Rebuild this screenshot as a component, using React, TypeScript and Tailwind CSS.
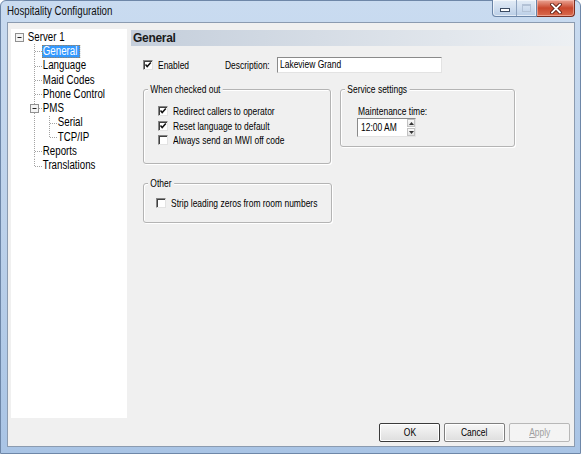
// Hospitality Configuration dialog - Windows 7 style property window
import React from "react";

type GutterKind = "child" | "childLast" | "pms" | "grand" | "grandLast";

const ROW_H = 14.3;
const MID = 7.5;

// The dialog font is a narrow sans; Liberation Sans squeezed horizontally gives the same run widths
const Txt = ({ children, wide, center }: { children: React.ReactNode; wide?: boolean; center?: boolean }) => (
  <span
    className={`inline-block whitespace-nowrap ${wide ? "scale-x-[0.81]" : "scale-x-[0.77]"} ${
      center ? "origin-center" : "origin-left"
    }`}
  >
    {children}
  </span>
);

const Expander = ({ x, y }: { x: number; y: number }) => (
  <g>
    <rect x={x} y={y} width={8} height={8} fill="#f4f4f4" stroke="#919191" />
    <line x1={x + 2} y1={y + 4} x2={x + 6} y2={y + 4} stroke="#222" />
  </g>
);

const Dots = ({ x1, y1, x2, y2 }: { x1: number; y1: number; x2: number; y2: number }) => (
  <line x1={x1} y1={y1} x2={x2} y2={y2} stroke="#a3a3a3" strokeDasharray="1 1" />
);

function Gutter({ kind }: { kind: GutterKind }) {
  if (kind === "grand" || kind === "grandLast") {
    return (
      <svg width="31" height={ROW_H} className="shrink-0">
        <Dots x1={8.5} y1={0} x2={8.5} y2={ROW_H} />
        <Dots x1={23.5} y1={0} x2={23.5} y2={kind === "grand" ? ROW_H : MID} />
        <Dots x1={24} y1={MID} x2={31} y2={MID} />
      </svg>
    );
  }
  return (
    <svg width="16" height={ROW_H} className="shrink-0">
      <Dots x1={8.5} y1={0} x2={8.5} y2={kind === "childLast" ? MID : ROW_H} />
      {kind === "pms" ? (
        <>
          <Dots x1={13} y1={MID} x2={16} y2={MID} />
          <Expander x={4.5} y={MID - 4} />
        </>
      ) : (
        <Dots x1={9} y1={MID} x2={16} y2={MID} />
      )}
    </svg>
  );
}

const TreeLabel = ({ label, selected }: { label: string; selected?: boolean }) => (
  <span
    className={`inline-block h-[13px] origin-left scale-x-[0.81] whitespace-nowrap border pr-[2px] leading-[11px] ${
      selected ? "border-dotted border-[#b07a3c] bg-[#3399ff] text-white" : "border-transparent"
    }`}
  >
    {label}
  </span>
);

const TreeRow = ({ label, kind, selected }: { label: string; kind: GutterKind; selected?: boolean }) => (
  <div className="flex h-[14.3px] items-center pl-[15px]">
    <Gutter kind={kind} />
    <TreeLabel label={label} selected={selected} />
  </div>
);

function Check({ checked }: { checked?: boolean }) {
  return (
    <span className="flex h-[10px] w-[10px] shrink-0 items-center justify-center border border-b-[#e3e3e3] border-l-[#858585] border-r-[#e3e3e3] border-t-[#858585] bg-white shadow-[inset_1px_1px_0_#404040]">
      {checked && (
        <svg width="8" height="8" viewBox="0 0 8 8">
          <path d="M1.5 3.5 L3.2 5.5 L6.8 1.5" stroke="#111" strokeWidth="1.5" fill="none" />
        </svg>
      )}
    </span>
  );
}

const CheckRow = ({ label, checked, className = "" }: { label: string; checked?: boolean; className?: string }) => (
  <div className={`flex items-center gap-[5px] ${className}`}>
    <Check checked={checked} />
    <span className="leading-[14px]">
      <Txt>{label}</Txt>
    </span>
  </div>
);

const GroupBox = ({ title, className, children }: { title: string; className: string; children: React.ReactNode }) => (
  <div className={`relative rounded-[3px] border border-[#b4b4b4] shadow-[inset_1px_1px_0_#ffffff,1px_1px_0_#ffffff] ${className}`}>
    <span className="absolute left-[4px] top-[-8px] inline-block origin-left scale-x-[0.77] whitespace-nowrap bg-[#f0f0f0] px-[3px] leading-[14px]">
      {title}
    </span>
    {children}
  </div>
);

const DialogButton = ({ children, isDefault, disabled }: { children: React.ReactNode; isDefault?: boolean; disabled?: boolean }) => (
  <button
    type="button"
    className={`flex h-[19px] w-[61px] items-center justify-center rounded-[2px] border bg-gradient-to-b text-[11px] leading-[17px] ${
      disabled
        ? "border-[#b8b8b8] from-[#f4f4f4] to-[#f4f4f4] text-[#a0a0a0]"
        : isDefault
          ? "border-[#3b3b3b] from-[#f7f7f7] to-[#dedede] shadow-[inset_0_0_0_1px_#ffffff]"
          : "border-[#7f7f7f] from-[#f7f7f7] to-[#dedede] shadow-[inset_0_0_0_1px_#ffffff]"
    }`}
  >
    <Txt center>{children}</Txt>
  </button>
);

const SunkenBox = "border border-b-[#e3e3e3] border-l-[#8a8a8a] border-r-[#e3e3e3] border-t-[#8a8a8a] bg-white";

export default function App() {
  return (
    <div className="h-[454px] w-[581px] overflow-hidden bg-white">
      <div className="flex h-full w-full flex-col rounded-t-[6px] border border-[#6e87a8] bg-gradient-to-b from-[#c9dbf0] via-[#bcd1ea] to-[#a9c4e5] font-['Liberation_Sans',sans-serif] text-[11px] text-black">
        {/* title bar */}
        <div className="flex h-[21px] shrink-0 items-start justify-between">
          <span className="pl-[6px] pt-[3px] text-[12px] leading-[15px] text-[#101010]">
            <Txt wide>Hospitality Configuration</Txt>
          </span>
          <div className="mr-[5px] -mt-[1px] flex h-[17px]">
            <div className="flex w-[45px] overflow-hidden rounded-bl-[4px] border border-t-0 border-[#6a84a6] bg-gradient-to-b from-[#e3ecf6] via-[#d0deef] to-[#b9cde6] shadow-[inset_0_0_0_1px_rgba(255,255,255,0.6)]">
              <div className="flex w-[24px] items-end justify-center border-r border-[#8ea3bf] pb-[4px]">
                <span className="h-[4px] w-[10px] border border-[#3b4b62] bg-white" />
              </div>
              <div className="flex flex-1 items-center justify-center">
                <span className="h-[8px] w-[9px] border border-t-2 border-[#b3c2d6]" />
              </div>
            </div>
            <div className="flex w-[38px] items-center justify-center rounded-br-[4px] border border-l-0 border-t-0 border-[#7b2d1f] bg-gradient-to-b from-[#e9a394] via-[#c9472d] to-[#d96a4d] shadow-[inset_0_0_0_1px_rgba(255,210,200,0.5)]">
              <svg width="12" height="11" viewBox="0 0 12 11">
                <path d="M2 1.5 L10 9.5 M10 1.5 L2 9.5" stroke="#5a1a10" strokeWidth="3.6" strokeLinecap="square" />
                <path d="M2 1.5 L10 9.5 M10 1.5 L2 9.5" stroke="#ffffff" strokeWidth="1.8" strokeLinecap="square" />
              </svg>
            </div>
          </div>
        </div>

        {/* client area */}
        <div className="flex-1 pb-[6px] pl-[6px] pr-[5px]">
          <div className="flex h-full flex-col border border-[#8b9bb0] bg-[#f0f0f0]">
            <div className="flex h-[395px] shrink-0">
              {/* tree */}
              <div className="ml-[3px] mt-[6px] h-[389px] w-[116px] bg-white pt-[1px] text-[12px]">
                <div className="flex h-[14.3px] items-center pl-[4px]">
                  <svg width="9" height={ROW_H} className="shrink-0">
                    <Expander x={0.5} y={MID - 4} />
                  </svg>
                  <span className="ml-[3px] inline-block origin-left scale-x-[0.81] whitespace-nowrap border border-transparent leading-[11px]">
                    Server 1
                  </span>
                </div>
                <TreeRow label="General" kind="child" selected />
                <TreeRow label="Language" kind="child" />
                <TreeRow label="Maid Codes" kind="child" />
                <TreeRow label="Phone Control" kind="child" />
                <TreeRow label="PMS" kind="pms" />
                <TreeRow label="Serial" kind="grand" />
                <TreeRow label="TCP/IP" kind="grandLast" />
                <TreeRow label="Reports" kind="child" />
                <TreeRow label="Translations" kind="childLast" />
              </div>

              {/* page */}
              <div className="ml-[4px] mt-[7px] flex flex-1 flex-col">
                <div className="flex h-[16px] items-center bg-gradient-to-r from-[#c4cedb] to-[#edf0f3] pl-[2px] text-[12px] font-bold tracking-[-0.3px] text-[#1a1a1a]">
                  General
                </div>

                <div className="mt-[11px] flex h-[16px] items-center pl-[12px]">
                  <CheckRow label="Enabled" checked className="w-[82px]" />
                  <span className="w-[52px] leading-[14px]">
                    <Txt>Description:</Txt>
                  </span>
                  <div className={`h-[16px] w-[165px] pl-[2px] leading-[13px] ${SunkenBox}`}>
                    <Txt>Lakeview Grand</Txt>
                  </div>
                </div>

                <div className="mt-[16px] flex items-start pl-[12px]">
                  <GroupBox title="When checked out" className="h-[75px] w-[188px]">
                    <div className="flex flex-col pl-[14px] pt-[14px]">
                      <CheckRow label="Redirect callers to operator" checked className="h-[14.5px]" />
                      <CheckRow label="Reset language to default" checked className="h-[14.5px]" />
                      <CheckRow label="Always send an MWI off code" className="h-[14.5px]" />
                    </div>
                  </GroupBox>

                  <GroupBox title="Service settings" className="ml-[9px] h-[58px] w-[175px]">
                    <div className="pl-[16px] pt-[14px]">
                      <div className="h-[14px] pl-[1px] leading-[14px]">
                        <Txt>Maintenance time:</Txt>
                      </div>
                      <div className={`flex h-[19px] w-[59px] ${SunkenBox}`}>
                        <span className="flex-1 pl-[3px] leading-[17px]">
                          <Txt>12:00 AM</Txt>
                        </span>
                        <div className="flex w-[13px] flex-col gap-[1px]">
                          <div className="flex flex-1 items-center justify-center border border-[#c2c2c2] bg-gradient-to-b from-[#fafafa] to-[#e4e4e4]">
                            <svg width="5" height="3" viewBox="0 0 5 3">
                              <path d="M2.5 0 L5 3 L0 3 Z" fill="#333" />
                            </svg>
                          </div>
                          <div className="flex flex-1 items-center justify-center border border-[#c2c2c2] bg-gradient-to-b from-[#fafafa] to-[#e4e4e4]">
                            <svg width="5" height="3" viewBox="0 0 5 3">
                              <path d="M0 0 L5 0 L2.5 3 Z" fill="#333" />
                            </svg>
                          </div>
                        </div>
                      </div>
                    </div>
                  </GroupBox>
                </div>

                <div className="mt-[19px] pl-[12px]">
                  <GroupBox title="Other" className="h-[40px] w-[189px]">
                    <div className="pl-[12px] pt-[12px]">
                      <CheckRow label="Strip leading zeros from room numbers" className="h-[14px]" />
                    </div>
                  </GroupBox>
                </div>
              </div>
            </div>

            {/* dialog buttons */}
            <div className="mt-[5px] flex justify-end gap-[4px] pr-[4px]">
              <DialogButton isDefault>OK</DialogButton>
              <DialogButton>Cancel</DialogButton>
              <DialogButton disabled>
                <span className="underline">A</span>pply
              </DialogButton>
            </div>
          </div>
        </div>
      </div>
    </div>
  );
}
